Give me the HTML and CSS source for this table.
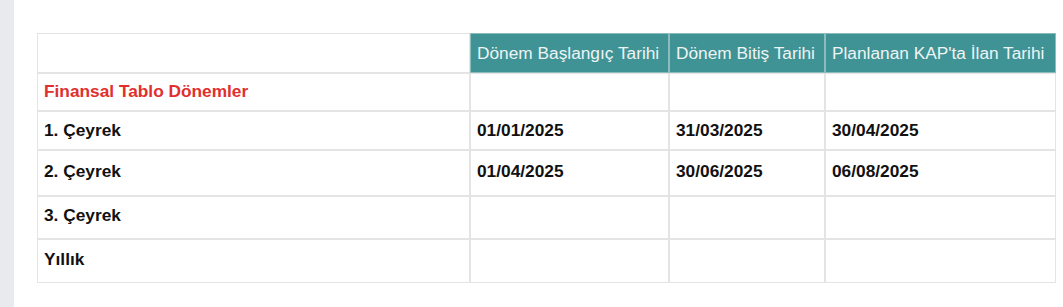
FILE: index.html
```html
<!DOCTYPE html>
<html lang="tr">
<head>
<meta charset="utf-8">
<title>Finansal Tablo Dönemler</title>
<link rel="stylesheet" href="styles.css">
</head>
<body>
<div class="page">
  <aside class="strip"></aside>
  <main class="content">
    <table class="periods">
      <colgroup>
        <col class="c1"><col class="c2"><col class="c3"><col class="c4">
      </colgroup>
      <thead>
        <tr class="h-head">
          <th class="blank"></th>
          <th>Dönem Başlangıç Tarihi</th>
          <th>Dönem Bitiş Tarihi</th>
          <th>Planlanan KAP'ta İlan Tarihi</th>
        </tr>
      </thead>
      <tbody>
        <tr class="h-r1">
          <td class="title">Finansal Tablo Dönemler</td><td></td><td></td><td></td>
        </tr>
        <tr class="h-r2">
          <td>1. Çeyrek</td><td>01/01/2025</td><td>31/03/2025</td><td>30/04/2025</td>
        </tr>
        <tr class="h-r3 tall">
          <td>2. Çeyrek</td><td>01/04/2025</td><td>30/06/2025</td><td>06/08/2025</td>
        </tr>
        <tr class="h-r4 tall">
          <td>3. Çeyrek</td><td></td><td></td><td></td>
        </tr>
        <tr class="h-r5 tall">
          <td>Yıllık</td><td></td><td></td><td></td>
        </tr>
      </tbody>
    </table>
  </main>
</div>
</body>
</html>
```
FILE: styles.css
```css
html, body {
  margin: 0;
  padding: 0;
  background: #ffffff;
}
body {
  font-family: "Liberation Sans", Arial, Helvetica, sans-serif;
}
.page {
  display: flex;
  min-height: 307px;
}
.strip {
  width: 14px;
  flex: 0 0 14px;
  background: #e8ebee;
}
.content {
  flex: 1;
  padding: 33px 0 0 23px;
}
.periods {
  width: 1019px;
  table-layout: fixed;
  border-collapse: separate;
  border-spacing: 0;
  font-size: 17.3px;
}
.c1 { width: 433px; }
.c2 { width: 199px; }
.c3 { width: 156px; }
.c4 { width: 231px; }

.periods th,
.periods td {
  border: 1px solid #e4e4e4;
  padding: 0 6px;
  text-align: left;
  vertical-align: middle;
  white-space: nowrap;
  overflow: hidden;
}
.periods th {
  background: #3f9395;
  color: #eef4f4;
  font-weight: normal;
  border-color: #8ebcbd;
}
.periods th.blank {
  background: #ffffff;
  border-color: #e4e4e4;
}
.periods td {
  color: #111111;
  font-weight: bold;
}
.periods td.title {
  color: #e0302d;
}
.periods tr.h-r1 td {
  padding-bottom: 2px;
}
.periods tr.tall td {
  padding-bottom: 4px;
}
.h-head { height: 40px; }
.h-r1 { height: 38px; }
.h-r2 { height: 39px; }
.h-r3 { height: 46px; }
.h-r4 { height: 43px; }
.h-r5 { height: 44px; }
```
